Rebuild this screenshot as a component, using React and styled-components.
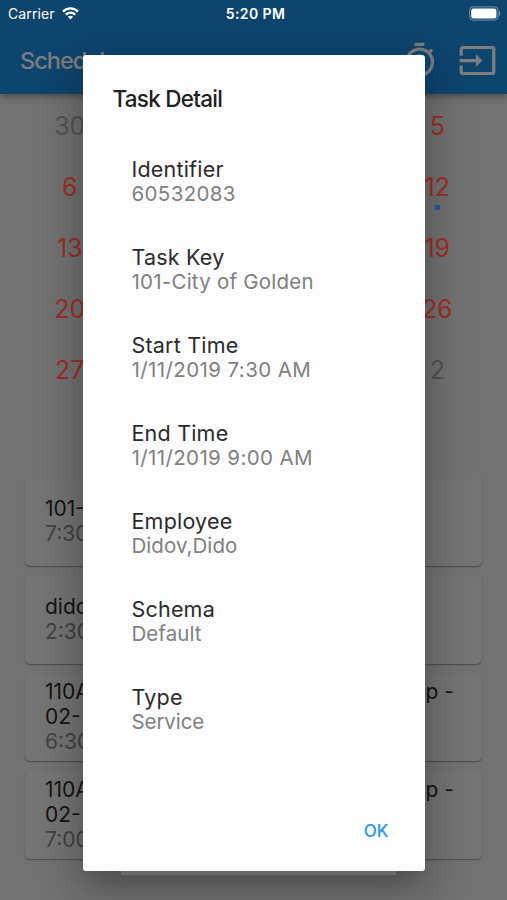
import styled, { createGlobalStyle } from 'styled-components';
import { MdInput, MdOutlineTimer } from 'react-icons/md';

// first and last day of each week
const weeks = [
  [30, 5],
  [6, 12],
  [13, 19],
  [20, 26],
  [27, 2],
];

const tasks = [
  { id: 1, lines: [['101-']], time: '7:30' },
  { id: 2, lines: [['dido']], time: '2:30' },
  { id: 3, lines: [['110A', 'p -'], ['02-']], time: '6:30' },
  { id: 4, lines: [['110A', 'p -'], ['02-']], time: '7:00' },
];

const details = [
  { label: 'Identifier', value: '60532083', spacing: 0.35 },
  { label: 'Task Key', value: '101-City of Golden', spacing: 0.23 },
  { label: 'Start Time', value: '1/11/2019 7:30 AM', spacing: 0.4 },
  { label: 'End Time', value: '1/11/2019 9:00 AM', spacing: 0.38 },
  { label: 'Employee', value: 'Didov,Dido', spacing: 0.05 },
  { label: 'Schema', value: 'Default', spacing: 0.05 },
  { label: 'Type', value: 'Service', spacing: -0.1 },
];

export default function App() {
  return (
    <Screen>
      <GlobalStyle />
      <AppBar>
        <BarTitle>Schedule</BarTitle>
        <MdOutlineTimer size={39} />
        <MdInput size={39} />
      </AppBar>
      <Calendar>
        {weeks.map((days, week) => (
          <Week key={week}>
            <Day $outside={week === 0}>{days[0]}</Day>
            <Day $outside={week === 4}>
              {days[1]}
              {week === 1 && <Marker />}
            </Day>
          </Week>
        ))}
      </Calendar>
      <TaskList>
        {tasks.map((task) => (
          <Card key={task.id}>
            {task.lines.map((parts) => (
              <CardTitle key={parts[0]}>
                {parts.map((part) => <span key={part}>{part}</span>)}
              </CardTitle>
            ))}
            <CardTime>{task.time}</CardTime>
          </Card>
        ))}
      </TaskList>
      <Overlay>
        <Dialog>
          <DialogTitle>Task Detail</DialogTitle>
          <Details>
            {details.map((item) => (
              <Detail key={item.label}>
                <Label>{item.label}</Label>
                <Value $spacing={item.spacing}>{item.value}</Value>
              </Detail>
            ))}
          </Details>
          <Actions>
            <OkButton>OK</OkButton>
          </Actions>
        </Dialog>
      </Overlay>
      <StatusBar>
        <Carrier>
          Carrier
          <Wifi />
        </Carrier>
        <Clock>5:20 PM</Clock>
        <Battery />
      </StatusBar>
    </Screen>
  );
}

function Wifi() {
  return (
    <svg width="17" height="13" viewBox="0 0 17 13" fill="none" stroke="#fff" strokeWidth="2.3">
      <path d="M1 4.6C5.2 0.3 11.8 0.3 16 4.6" />
      <path d="M3.8 7.6C6.4 5 10.6 5 13.2 7.6" />
      <path d="M8.5 12.4L5.9 9.8C7.4 8.4 9.6 8.4 11.1 9.8Z" fill="#fff" stroke="none" />
    </svg>
  );
}

function Battery() {
  return (
    <svg width="32" height="15" viewBox="0 0 32 15">
      <rect x="0.6" y="0.9" width="28.4" height="13.2" rx="3.6" fill="none" stroke="#fff" strokeOpacity="0.42" />
      <rect x="2.2" y="2.5" width="25.2" height="10" rx="2.2" fill="#fff" />
      <path d="M30.2 5.2C31.6 5.8 31.6 9.2 30.2 9.8Z" fill="#fff" fillOpacity="0.5" />
    </svg>
  );
}

const GlobalStyle = createGlobalStyle`
  body {
    margin: 0;
  }

  * {
    box-sizing: border-box;
  }
`;

const Screen = styled.div`
  position: relative;
  width: 507px;
  height: 900px;
  overflow: hidden;
  background: #a4a4a4;
  font-family: Inter, 'Liberation Sans', sans-serif;
`;

const AppBar = styled.div`
  position: relative;
  display: flex;
  align-items: center;
  height: 94px;
  padding: 26px 10px 0 20px;
  gap: 19px;
  background: #1563a0;
  color: #b4b4b4;
  box-shadow: 0 3px 6px rgba(0, 0, 0, 0.3);
`;

const BarTitle = styled.div`
  flex: 1;
  font-size: 23.5px;
  font-weight: 500;
  letter-spacing: -1px;
`;

const Calendar = styled.div`
  display: flex;
  flex-direction: column;
  height: 384px;
  padding: 1px 39px 0;
`;

const Week = styled.div`
  display: flex;
  justify-content: space-between;
  height: 61px;
`;

const Day = styled.div`
  position: relative;
  display: flex;
  align-items: center;
  justify-content: center;
  width: 61.5px;
  font-size: 25px;
  color: ${(props) => (props.$outside ? '#777777' : '#e2433a')};
`;

const Marker = styled.div`
  position: absolute;
  bottom: 7px;
  width: 5px;
  height: 5px;
  background: #397eec;
`;

const TaskList = styled.div`
  display: flex;
  flex-direction: column;
  gap: 10px;
  padding: 0 25px;
`;

const Card = styled.div`
  display: flex;
  flex-direction: column;
  justify-content: center;
  height: 87.8px;
  padding: 0 28px 1px 20px;
  border-radius: 5px;
  background: #a7a7a7;
  box-shadow: 0 1px 1.5px rgba(0, 0, 0, 0.36);
`;

const CardTitle = styled.div`
  display: flex;
  justify-content: space-between;
  font-size: 21px;
  line-height: 25px;
  color: #1e1e1e;
`;

const CardTime = styled.div`
  font-size: 21px;
  line-height: 25px;
  color: #5f5f5f;
`;

const Overlay = styled.div`
  position: absolute;
  inset: 0;
  display: flex;
  justify-content: center;
  align-items: flex-start;
  padding-top: 55px;
  background: rgba(0, 0, 0, 0.3);
`;

const Dialog = styled.div`
  position: relative;
  display: flex;
  flex-direction: column;
  width: 342px;
  height: 816px;
  border-radius: 3px;
  background: #fdfdfd;
  box-shadow:
    0 15px 20px -9px rgba(0, 0, 0, 0.15),
    0 20px 40px 3px rgba(0, 0, 0, 0.14),
    0 10px 46px 8px rgba(0, 0, 0, 0.12);

  &::after {
    content: '';
    position: absolute;
    top: 100%;
    left: 38px;
    right: 29px;
    height: 4px;
    background: rgba(255, 255, 255, 0.14);
  }
`;

const DialogTitle = styled.div`
  padding: 30px 30px 0;
  font-size: 22.5px;
  font-weight: 500;
  line-height: 28px;
  letter-spacing: -0.75px;
  color: #212121;
`;

const Details = styled.div`
  display: flex;
  flex: 1;
  flex-direction: column;
  gap: 39px;
  padding: 44px 49px 0;
`;

const Detail = styled.div`
  display: flex;
  flex-direction: column;
`;

const Label = styled.div`
  font-size: 21.5px;
  line-height: 25px;
  letter-spacing: 0.2px;
  color: #2b2b2b;
`;

const Value = styled.div`
  font-size: 20.5px;
  line-height: 24px;
  letter-spacing: ${(props) => props.$spacing}px;
  white-space: nowrap;
  color: #808080;
`;

const Actions = styled.div`
  display: flex;
  justify-content: flex-end;
  padding: 0 36px 28px;
`;

const OkButton = styled.button`
  padding: 0;
  border: 0;
  background: none;
  font-family: inherit;
  font-size: 17px;
  font-weight: 500;
  line-height: 24px;
  color: #2d96ea;
`;

const StatusBar = styled.div`
  position: absolute;
  top: 0;
  left: 0;
  display: grid;
  grid-template-columns: 1fr auto 1fr;
  align-items: center;
  width: 100%;
  height: 27px;
  padding: 0 6px 0 8px;
  color: #ffffff;

  > :last-child {
    justify-self: end;
  }
`;

const Carrier = styled.div`
  display: flex;
  align-items: center;
  gap: 7px;
  font-size: 14px;
  letter-spacing: 0.1px;
`;

const Clock = styled.div`
  padding-left: 2px;
  font-size: 14px;
  font-weight: 600;
  letter-spacing: 0.4px;
`;
